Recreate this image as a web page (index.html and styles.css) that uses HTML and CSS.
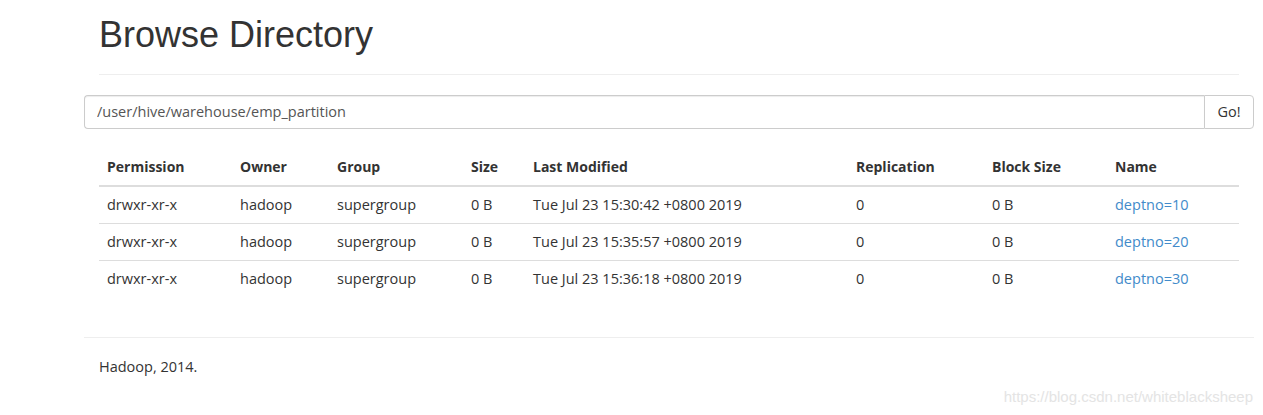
FILE: index.html
```html
<!DOCTYPE html>
<html>
<head>
<meta charset="utf-8">
<title>Browsing HDFS</title>
<link rel="stylesheet" href="styles.css">
</head>
<body>
<div class="container">
  <div class="page-header">
    <h1>Browse Directory</h1>
  </div>
  <form class="input-group">
    <input class="path-input" type="text" value="/user/hive/warehouse/emp_partition">
    <button class="go-btn" type="button">Go!</button>
  </form>
  <div class="panel">
    <table class="table">
      <thead>
        <tr>
          <th class="c-perm">Permission</th>
          <th class="c-owner">Owner</th>
          <th class="c-group">Group</th>
          <th class="c-size">Size</th>
          <th class="c-mod">Last Modified</th>
          <th class="c-rep">Replication</th>
          <th class="c-block">Block Size</th>
          <th class="c-name">Name</th>
        </tr>
      </thead>
      <tbody>
        <tr>
          <td>drwxr-xr-x</td><td>hadoop</td><td>supergroup</td><td>0 B</td>
          <td>Tue Jul 23 15:30:42 +0800 2019</td><td>0</td><td>0 B</td>
          <td><a href="#">deptno=10</a></td>
        </tr>
        <tr>
          <td>drwxr-xr-x</td><td>hadoop</td><td>supergroup</td><td>0 B</td>
          <td>Tue Jul 23 15:35:57 +0800 2019</td><td>0</td><td>0 B</td>
          <td><a href="#">deptno=20</a></td>
        </tr>
        <tr>
          <td>drwxr-xr-x</td><td>hadoop</td><td>supergroup</td><td>0 B</td>
          <td>Tue Jul 23 15:36:18 +0800 2019</td><td>0</td><td>0 B</td>
          <td><a href="#">deptno=30</a></td>
        </tr>
      </tbody>
    </table>
  </div>
  <hr class="footer-rule">
  <p class="footer-text">Hadoop, 2014.</p>
</div>
<div class="watermark">https://blog.csdn.net/whiteblacksheep</div>
</body>
</html>
```

FILE: styles.css
```css
* { box-sizing: border-box; }
html, body {
  margin: 0;
  padding: 0;
  background: #fff;
}
body {
  font-family: "Open Sans", "Noto Sans", sans-serif;
  font-size: 14.5px;
  line-height: 20px;
  color: #333;
  height: 415px;
  overflow: hidden;
  position: relative;
}
.container {
  width: 1170px;
  margin-left: 84px;
}
.page-header {
  margin: 0 15px 20px 15px;
  padding-bottom: 9px;
  border-bottom: 1px solid #eee;
}
.page-header h1 {
  font-family: "Liberation Sans", Arial, sans-serif;
  font-weight: normal;
  font-size: 36px;
  line-height: 39.6px;
  margin: 15px 0 10px 0;
  color: #333;
}
.input-group {
  display: flex;
  margin: 0;
  height: 34px;
}
.path-input {
  flex: 1;
  height: 34px;
  border: 1px solid #ccc;
  border-right: none;
  border-radius: 4px 0 0 4px;
  padding: 6px 12px;
  font-family: "Open Sans", "Noto Sans", sans-serif;
  font-size: 14.5px;
  color: #555;
  box-shadow: inset 0 1px 1px rgba(0,0,0,0.075);
  outline: none;
}
.go-btn {
  width: 50px;
  height: 34px;
  border: 1px solid #ccc;
  border-radius: 0 4px 4px 0;
  background: #fff;
  font-family: "Open Sans", "Noto Sans", sans-serif;
  font-size: 14.5px;
  color: #333;
  padding: 6px 0;
}
.panel {
  padding: 20px 15px 0 15px;
}
.table {
  width: 100%;
  border-collapse: collapse;
  margin-bottom: 40px;
  table-layout: fixed;
}
.table th, .table td {
  text-align: left;
  padding: 8px;
  line-height: 20px;
  vertical-align: top;
  white-space: nowrap;
}
.table th {
  font-weight: bold;
  font-size: 14px;
  border-bottom: 2px solid #ddd;
}
.table td {
  border-top: 1px solid #ddd;
}
.table tbody tr:first-child td { border-top: none; }
.c-perm { width: 133px; }
.c-owner { width: 97px; }
.c-group { width: 134px; }
.c-size { width: 62px; }
.c-mod { width: 323px; }
.c-rep { width: 136px; }
.c-block { width: 123px; }
.c-name { width: 132px; }
.table a {
  color: #428bca;
  text-decoration: none;
}
.footer-rule {
  border: 0;
  border-top: 1px solid #eee;
  margin: 0 0 19px 0;
}
.footer-text {
  margin: 0 15px;
}
.watermark {
  position: absolute;
  right: 10px;
  bottom: 8px;
  font-family: "Liberation Sans", Arial, sans-serif;
  font-size: 15px;
  color: #e4e4e4;
}
```
